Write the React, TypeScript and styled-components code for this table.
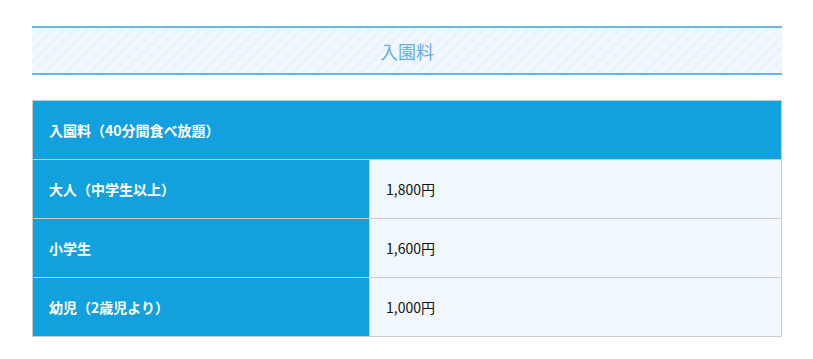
import React from "react";
import styled, { createGlobalStyle } from "styled-components";

const GlobalStyle = createGlobalStyle`
  body {
    margin: 0;
    background: #fff;
    font-family: "Noto Sans CJK JP", "Noto Sans", sans-serif;
    color: #222;
  }
`;

const Page = styled.div`
  padding: 26px 31px 0 32px;
`;

const Heading = styled.h2`
  margin: 0 0 25px;
  height: 45px;
  display: flex;
  align-items: center;
  justify-content: center;
  border-top: 2px solid #6cb6e6;
  border-bottom: 2px solid #6cb6e6;
  background: repeating-linear-gradient(
    -45deg,
    #eaf4fd 0,
    #eaf4fd 4px,
    #f2f8fe 4px,
    #f2f8fe 8px
  );
  color: #6aaee0;
  font-size: 18px;
  font-weight: normal;
`;

const Table = styled.table`
  width: 100%;
  border-collapse: collapse;
  font-size: 14px;
`;

const Cell = styled.td<{ head?: boolean }>`
  height: 58px;
  padding: 0 16px;
  border: 1px solid #cccccc;
  background: ${(p) => (p.head ? "#13a0de" : "#f0f8fd")};
  color: ${(p) => (p.head ? "#fff" : "#111")};
  font-weight: ${(p) => (p.head ? "bold" : "normal")};
  text-align: left;
  vertical-align: middle;
`;

const LabelCell = styled(Cell)`
  width: 304px;
`;

const rows = [
  { label: "大人（中学生以上）", price: "1,800円" },
  { label: "小学生", price: "1,600円" },
  { label: "幼児（2歳児より）", price: "1,000円" },
];

export default function App() {
  return (
    <>
      <GlobalStyle />
      <Page>
        <Heading>入園料</Heading>
        <Table>
          <tbody>
            <tr>
              <Cell head colSpan={2}>
                入園料（40分間食べ放題）
              </Cell>
            </tr>
            {rows.map((r) => (
              <tr key={r.label}>
                <LabelCell head>{r.label}</LabelCell>
                <Cell>{r.price}</Cell>
              </tr>
            ))}
          </tbody>
        </Table>
      </Page>
    </>
  );
}
